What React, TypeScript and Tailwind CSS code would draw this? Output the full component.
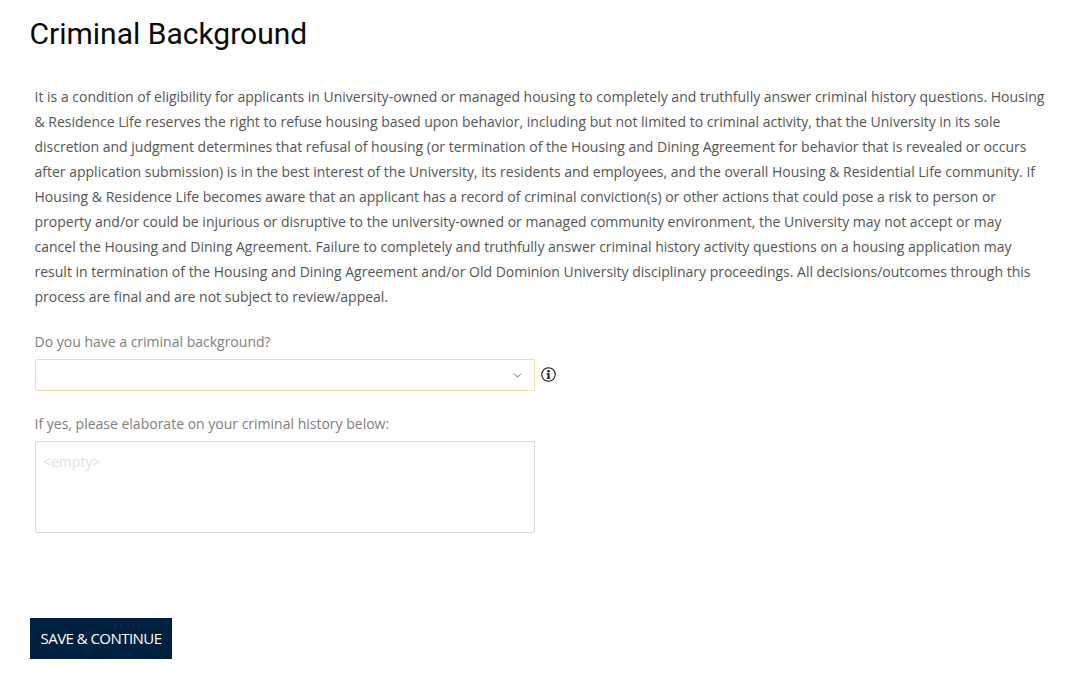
import { ChevronDown } from "lucide-react";

const App = () => {
    return (
        <div className="min-h-[681px] bg-white pl-[30px] pr-[25px] pt-[15px] font-['Open_Sans',sans-serif]">
            <h1 className="-ml-[0.5px] font-['Roboto',sans-serif] text-[30px] leading-[38px] text-[#0a0a0a]">Criminal Background</h1>

            <div className="px-[5px] pt-[31px]">
                <p className="-ml-[0.5px] text-[14px] leading-[25px] text-[#555555]">
                    It is a condition of eligibility for applicants in University-owned or managed housing to completely and truthfully answer criminal history questions. Housing &amp; Residence Life reserves the right to refuse housing based upon behavior, including but not limited to criminal activity, that the University in its sole discretion and judgment determines that refusal of housing (or termination of the Housing and Dining Agreement for behavior that is revealed or occurs after application submission) is in the best interest of the University, its residents and employees, and the overall Housing &amp; Residential Life community. If Housing &amp; Residence Life becomes aware that an applicant has a record of criminal conviction(s) or other actions that could pose a risk to person or property and/or could be injurious or disruptive to the university-owned or managed community environment, the University may not accept or may cancel the Housing and Dining Agreement. Failure to completely and truthfully answer criminal history activity questions on a housing application may result in termination of the Housing and Dining Agreement and/or Old Dominion University disciplinary proceedings. All decisions/outcomes through this process are final and are not subject to review/appeal.
                </p>

                <label className="mt-[23px] -ml-[0.5px] block text-[14px] leading-[20px] text-[#808080]">Do you have a criminal background?</label>
                <div className="mt-[7px] flex items-center gap-[6px]">
                    <div className="flex h-[32px] w-[500px] items-center justify-end rounded-[2px] border border-[#f0dfa8] bg-white pr-[10px]">
                        <ChevronDown className="h-[13px] w-[13px] text-[#555555]" strokeWidth={1.75} />
                    </div>
                    <svg className="-mt-[2px] h-[15px] w-[15px] text-[#111111]" viewBox="0 0 16 16" fill="none">
                        <circle cx="8" cy="8" r="7.2" stroke="currentColor" strokeWidth="1.1" />
                        <circle cx="8" cy="4.4" r="1.3" fill="currentColor" />
                        <path d="M6 6.7h3v4.7h1.1v1.2H5.9v-1.2h1.1V7.9H6z" fill="currentColor" />
                    </svg>
                </div>

                <label className="mt-[23px] -ml-[0.5px] block text-[14px] leading-[20px] text-[#808080]">If yes, please elaborate on your criminal history below:</label>
                <div className="mt-[7px] h-[92px] w-[500px] rounded-[2px] border border-[#d9d9d9] bg-white px-[7px] py-[10px] text-[14px] leading-[20px] text-[#e0e0e0]">
                    &lt;empty&gt;
                </div>
            </div>

            <button className="mt-[85px] flex h-[41px] w-[142px] items-center justify-center bg-[#00203f] text-[15px] tracking-[-0.55px] text-white">
                SAVE &amp; CONTINUE
            </button>
        </div>
    );
};

export default App;
